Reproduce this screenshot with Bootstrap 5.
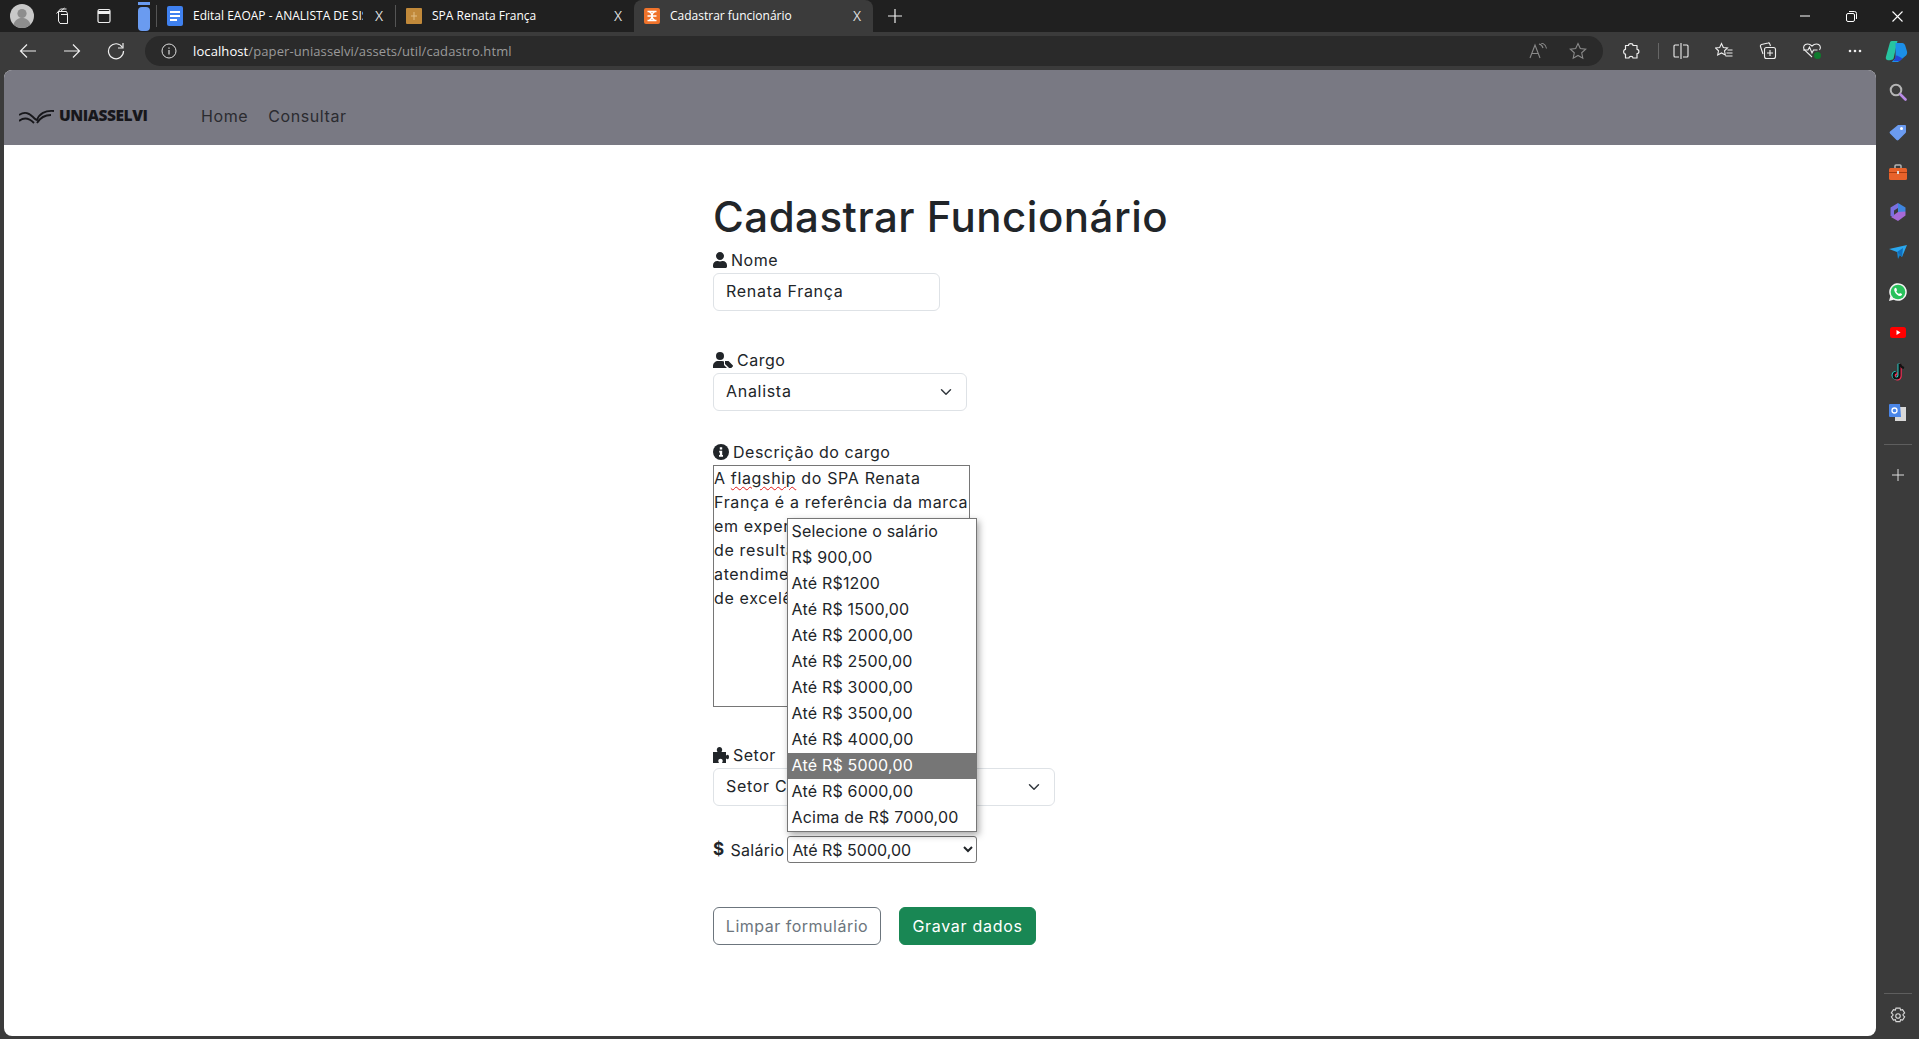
<!DOCTYPE html>
<html lang="pt-BR">
<head>
<meta charset="utf-8">
<title>Cadastrar funcionário</title>
<link rel="stylesheet" href="https://cdn.jsdelivr.net/npm/bootstrap@5.3.0/dist/css/bootstrap.min.css">
<style>
html,body{height:100%;margin:0;overflow:hidden;background:#3b3b3b}
body{font-family:Inter,"Open Sans",sans-serif;font-size:16px;color:#212529}
.shell{height:1039px;width:1919px}
.tabstrip{height:32px;background:#202020;color:#fff;font:12px/32px "Open Sans",sans-serif}
.chromeicon{flex:none;display:flex;align-items:center;justify-content:center}
.chromeicon svg{display:block}
.tabitem{height:32px;width:238px;flex:none;padding:0 10px 0 10px;gap:10px}
.tabitem.activetab{background:#3b3b3b;border-radius:8px 8px 0 0;width:239px}
.tablabel{flex:1;overflow:hidden;white-space:nowrap}
.tabclose{font-size:14px;line-height:1;color:#ddd;flex:none;width:12px;text-align:center}
.tabdiv{width:1px;height:22px;background:#555;flex:none}
.pillslot{width:12px;margin-left:11px;margin-right:6px}
.toolbar{height:38px;background:#3b3b3b;color:#ddd}
.addressbar{width:1458px;height:30px;margin-left:9px;background:#2a2a2a;border-radius:15px;font:13px/30px "Open Sans",sans-serif;color:#9a9a9a;letter-spacing:.1px}
.urlhost{color:#fff}
.mainrow{height:969px}
.pagepane{width:1872px;margin-left:4px;height:966px;background:#fff;border-radius:8px;overflow:hidden}
.sidepane{width:43px;background:#3b3b3b}
.sideslot{height:40px}
.sidesep{width:28px;height:1px;background:#5e5e5e}
.topnav{height:75px;background:#797983;padding:17px 0 0 15px}
.brandmark{width:182px;color:#17171b;font:800 15.5px/1 "Open Sans",sans-serif;letter-spacing:-.45px;gap:5px}
.navtext{color:#2b2b30;font-size:16px;letter-spacing:.6px;text-decoration:none}
.formcol{width:454px;margin:0 auto;position:relative;padding-top:48px}
.formcol h1{font-size:42px;line-height:48px;font-weight:500;margin:0 0 7px;letter-spacing:.5px;color:#212529;white-space:nowrap}
.fieldlabel{display:flex;align-items:center;height:24px;margin-bottom:1px;gap:4px;letter-spacing:.5px}
.softfield{height:38px;border:1px solid #dee2e6;border-radius:6px;font-size:16px;padding:5px 12px 7px;letter-spacing:.7px;color:#212529}
.w-nome{width:227px}.w-cargo{width:254px}.w-setor{width:342px}
.gap-a{margin-bottom:37px}.gap-b{margin-bottom:29px}
.descbox{width:257px;height:242px;border:1px solid #767676;overflow:hidden;white-space:nowrap;line-height:24px;padding:0;margin-bottom:36px;letter-spacing:.65px}
.spellmark{text-decoration:underline wavy #e01b1b 1px;text-underline-offset:2px}
.salaryrow{height:27px;margin:30px 0 44px;gap:3px;letter-spacing:.3px}
.dollarsign{font-weight:700;font-size:17px;line-height:1;margin-right:2px}
.nativepick{width:190px;height:27px;border:1px solid #767676;border-radius:3px;background:#fff;font:16px Inter,sans-serif;color:#212529;letter-spacing:0}
.popuplist{position:absolute;left:74px;top:373px;width:190px;height:314px;background:#fff;border:1px solid #767676;box-shadow:2px 3px 7px rgba(0,0,0,.35);padding:0;z-index:5;margin:0;list-style:none}
.popuplist li{height:26px;line-height:25px;padding-left:3.500px;letter-spacing:.2px;white-space:nowrap}
.popuplist li.picked{background:#767676;color:#fff}
.formbtn{height:38px;font-size:16px;padding:0;white-space:nowrap;display:inline-flex;align-items:center;justify-content:center}
.clearbtn{width:168px;margin-right:18px;letter-spacing:.5px}
.savebtn{width:137px;letter-spacing:.7px}
.winctrls{margin-right:-1px}
</style>
</head>
<body>
<div class="shell d-flex flex-column">
  <div class="tabstrip d-flex align-items-center">
    <div class="chromeicon" style="width:44px"><svg width="24" height="24" viewBox="0 0 24 24"><circle cx="12" cy="12" r="12" fill="#c9c9c9"/><circle cx="12" cy="9.500" r="4.600" fill="#8d8d8d"/><path d="M3.500 20.500c1.500-5 5-6.500 8.500-6.500s7 1.500 8.500 6.500c-2 2.200-5 3.500-8.500 3.500s-6.500-1.300-8.500-3.500z" fill="#8d8d8d"/></svg></div>
    <div class="chromeicon" style="width:37px"><svg width="18" height="18" viewBox="0 0 18 18" fill="none" stroke="#eee"><path d="M4.500 4.500h8l1 2.500v9.500h-7.500l-1.500-2.500z"/><path d="M2.500 6.500l4-4.500h6M6.500 4.500l4-3.500"/><path d="M7 7.500h6.500"/></svg></div>
    <div class="chromeicon" style="width:46px"><svg width="16" height="16" viewBox="0 0 16 16" fill="none" stroke="#eee" stroke-width="1.200"><rect x="2" y="1.500" width="12" height="13" rx="1.500"/><path d="M2 4.500h12" stroke-width="3"/></svg></div>
    <div class="chromeicon pillslot"><svg width="12" height="29" viewBox="0 0 12 29"><rect x="0" width="12" height="3" fill="#6a9bf0"/><rect x="0" y="5" width="12" height="24" rx="4" fill="#6a9bf0"/></svg></div>
    <div class="tabdiv"></div>
    <div class="tabitem d-flex align-items-center">
      <svg class="flex-none" width="16" height="20" viewBox="0 0 16 20"><rect width="16" height="20" rx="2" fill="#3f81f0"/><path d="M3 5h10v2H3zM3 9h10v2H3zM3 13h7v2H3z" fill="#fff"/></svg>
      <span class="tablabel">Edital EAOAP - ANALISTA DE SIST</span><span class="tabclose">X</span>
    </div>
    <div class="tabdiv"></div>
    <div class="tabitem d-flex align-items-center">
      <svg width="16" height="16" viewBox="0 0 16 16"><rect width="16" height="16" rx="1" fill="#c1893a"/><path d="M8 4v8M5 8h6" stroke="#e2bd82"/></svg>
      <span class="tablabel">SPA Renata França</span><span class="tabclose">X</span>
    </div>
    <div class="tabitem activetab d-flex align-items-center">
      <svg width="16" height="16" viewBox="0 0 16 16"><rect width="16" height="16" rx="2" fill="#f0732b"/><path d="M3.500 3.500h9M3.500 12.500h9M5 3.500c4 2 4 7 0 9M11 3.500c-4 2-4 7 0 9M3.500 8h9" stroke="#fff" stroke-width="1.300" fill="none"/></svg>
      <span class="tablabel">Cadastrar funcionário</span><span class="tabclose">X</span>
    </div>
    <div class="chromeicon" style="width:44px"><svg width="16" height="16" viewBox="0 0 16 16" stroke="#eee" stroke-width="1.200"><path d="M8 1v14M1 8h14"/></svg></div>
    <div class="d-flex ms-auto winctrls">
      <div class="chromeicon" style="width:46px"><svg width="10" height="10" viewBox="0 0 10 10" stroke="#fff"><path d="M0 5h10"/></svg></div>
      <div class="chromeicon" style="width:46px"><svg width="11" height="11" viewBox="0 0 11 11" fill="none" stroke="#fff"><rect x=".5" y="2.500" width="8" height="8" rx="1.500"/><path d="M3 .5h5.500a2 2 0 0 1 2 2V8"/></svg></div>
      <div class="chromeicon" style="width:46px"><svg width="11" height="11" viewBox="0 0 11 11" stroke="#fff" stroke-width="1.100"><path d="M.5.5l10 10M10.500.5l-10 10"/></svg></div>
    </div>
  </div>

  <div class="toolbar d-flex align-items-center">
    <div class="chromeicon ms-2" style="width:40px"><svg width="18" height="18" viewBox="0 0 18 18" fill="none" stroke="#eee" stroke-width="1.200"><path d="M17 9H1.500M8 2.500L1.500 9 8 15.500"/></svg></div>
    <div class="chromeicon" style="width:48px"><svg width="18" height="18" viewBox="0 0 18 18" fill="none" stroke="#eee" stroke-width="1.200"><path d="M1 9h15.500M10 2.500L16.500 9 10 15.500"/></svg></div>
    <div class="chromeicon" style="width:40px"><svg width="18" height="18" viewBox="0 0 18 18" fill="none" stroke="#eee" stroke-width="1.200"><path d="M15.500 5.500A7.500 7.500 0 1 0 16.500 9"/><path d="M16 1v5h-5"/></svg></div>
    <div class="addressbar d-flex align-items-center">
      <svg class="ms-3" width="16" height="16" viewBox="0 0 16 16" fill="none" stroke="#ddd"><circle cx="8" cy="8" r="7"/><path d="M8 7v4.500M8 4.500v1.200" stroke-width="1.200"/></svg>
      <span style="margin-left:16px"><span class="urlhost">localhost</span>/paper-uniasselvi/assets/util/cadastro.html</span>
      <div class="ms-auto d-flex align-items-center">
        <svg width="18" height="16" viewBox="0 0 18 16" fill="none" stroke="#8a8a8a" stroke-width="1.100"><path d="M1 15L6 2l5 13M3 10.500h6"/><path d="M10 1c2 .5 3.500 2 4 4M12 0c3 .5 5 3 5.500 5.500"/></svg>
        <svg style="margin:0 16px 0 22px" width="18" height="18" viewBox="0 0 18 18" fill="none" stroke="#8a8a8a" stroke-width="1.100"><path d="M9 1.500l2.300 5 5.400.6-4 3.700 1.100 5.400L9 13.500l-4.800 2.700 1.100-5.400-4-3.700 5.400-.6z"/></svg>
      </div>
    </div>
    <div class="chromeicon" style="width:55px"><svg width="18" height="18" viewBox="0 0 18 18" fill="none" stroke="#eee" stroke-width="1.200"><path d="M6.500 3.500C6.500 1 11 1 11 3.500H15v3.800c2.500 0 2.500 4.400 0 4.400V16h-4c0-2.200-4-2.200-4 0H3.500v-3.800C1 12.200 1 7.300 3.500 7.300V3.500z" stroke-linejoin="round"/></svg></div>
    <div class="tabdiv" style="height:16px;background:#666"></div>
    <div class="chromeicon" style="width:43px"><svg width="16" height="16" viewBox="0 0 16 16" fill="none" stroke="#eee" stroke-width="1.100"><path d="M6 2H2a1 1 0 0 0-1 1v10a1 1 0 0 0 1 1h4M10 2h4a1 1 0 0 1 1 1v10a1 1 0 0 1-1 1h-4M8 0v16"/></svg></div>
    <div class="chromeicon" style="width:43px"><svg width="18" height="18" viewBox="0 0 18 18" fill="none" stroke="#eee" stroke-width="1.100"><path d="M6.500 1.500l1.800 4 4.200.5-3 2.800.8 4.200-3.800-2.100-3.800 2.100.8-4.200-3-2.800 4.200-.5zM12.500 8h5M11.500 11h6M10.500 14h7"/></svg></div>
    <div class="chromeicon" style="width:45px"><svg width="18" height="18" viewBox="0 0 18 18" fill="none" stroke="#eee" stroke-width="1.100"><path d="M4 12L1.500 4.500a1.500 1.500 0 0 1 1-2L9 1a1.500 1.500 0 0 1 1.800 1l.7 2"/><rect x="5.500" y="5.500" width="11" height="11" rx="2"/><path d="M11 8v6M8 11h6"/></svg></div>
    <div class="chromeicon" style="width:43px"><svg width="20" height="18" viewBox="0 0 20 18" fill="none" stroke="#eee" stroke-width="1.100"><path d="M10 15L2.500 8C.5 5.500 2 2 5.500 2 7.500 2 9 3 10 4c1-1 2.500-2 4.500-2C18 2 19.500 5.500 17.500 8"/><path d="M1 8h5l1.500-3 2.500 6 1.500-3h4"/><circle cx="15.500" cy="13.500" r="3.500" fill="#0f7b2e" stroke="none"/></svg></div>
    <div class="chromeicon" style="width:44px"><svg width="14" height="4" viewBox="0 0 14 4" fill="#eee"><circle cx="2" cy="2" r="1.300"/><circle cx="7" cy="2" r="1.300"/><circle cx="12" cy="2" r="1.300"/></svg></div>
    <div class="chromeicon" style="width:39px"><svg width="25" height="23" viewBox="0 0 24 24"><path d="M7 1h6L9 19c-.3 1.500-3 2-4 2H3c-2 0-2.500-2-2-3.500L5 3c.3-1 1-2 2-2z" fill="#27c4a0"/><path d="M11 3h7c1.500 0 2.500 1 3 2.500L23 12c.5 2-.5 4-2 5l-5 4c-1 1-2 2-4 2H7l4-4z" fill="#1c8fe8"/><path d="M9 22h5c1 0 3-1 4-3l-6-3z" fill="#2346d6"/></svg></div>
  </div>

  <div class="mainrow d-flex">
    <main class="pagepane">
      <nav class="navbar topnav d-flex align-items-center flex-nowrap justify-content-start">
        <div class="brandmark d-flex align-items-center">
          <svg width="35" height="15" viewBox="0 0 35 15" fill="none" stroke="#17171b" stroke-width="1.800"><path d="M0 6c6-4 10-2 14 2 2 2 3 3 4 3 2-6 8-10 17-9"/><path d="M0 12c5-4 10-3 15 2M18 14c3-5 8-8 14-8"/></svg>
          <span>UNIASSELVI</span>
        </div>
        <a class="navtext" href="#">Home</a>
        <a class="navtext" style="margin-left:20px" href="#">Consultar</a>
      </nav>
      <form class="formcol" onsubmit="return false">
        <h1>Cadastrar Funcionário</h1>
        <label class="fieldlabel"><svg width="14" height="16" viewBox="0 0 448 512" fill="#212529"><path d="M224 256c70.700 0 128-57.300 128-128S294.700 0 224 0 96 57.300 96 128s57.300 128 128 128zm89.600 32h-16.700c-22.200 10.200-46.900 16-72.900 16s-50.600-5.800-72.900-16h-16.700C60.200 288 0 348.200 0 422.400V464c0 26.500 21.500 48 48 48h352c26.500 0 48-21.500 48-48v-41.600c0-74.200-60.200-134.400-134.400-134.400z"/></svg>Nome</label>
        <input class="form-control softfield w-nome gap-a" value="Renata França">
        <label class="fieldlabel"><svg width="20" height="16" viewBox="0 0 20 16" fill="#212529"><circle cx="7" cy="4" r="4"/><path d="M0 16v-2c0-3 2.500-5 5-5h4c1 0 1.500.2 2 .5V13l3 3z"/><path d="M12 9h3.500l4.200 4.200a1 1 0 0 1 0 1.400l-1.800 1.800a1 1 0 0 1-1.400 0L12 12z"/></svg>Cargo</label>
        <select class="form-select softfield w-cargo gap-b"><option>Analista</option></select>
        <label class="fieldlabel"><svg width="16" height="16" viewBox="0 0 16 16"><circle cx="8" cy="8" r="8" fill="#212529"/><path d="M6.800 3.200h2.400v2.200H6.800zM6.200 6.800h3v4.200h.8v1.800H6v-1.800h.9V8.600h-.7z" fill="#fff"/></svg>Descrição do cargo</label>
        <div class="descbox">A <span class="spellmark">flagship</span> do SPA Renata<br>França é a referência da marca<br>em experiências e na entrega<br>de resultados, com<br>atendimento personalizado e<br>de excelência.</div>
        <label class="fieldlabel"><svg width="16" height="16" viewBox="0 0 16 16" fill="#212529"><path d="M0 5h4.500C4 4 3.800 3.500 3.800 2.800 3.800 1.200 5 0 6.500 0s2.700 1.200 2.700 2.800c0 .7-.2 1.200-.7 2.200H13v3.500c1-.5 1.500-.7 1.800-.7C15.500 7.800 16 8.800 16 10s-.5 2.200-1.200 2.200c-.3 0-.8-.2-1.800-.7V16H9c.5-1 .7-1.500.7-2.200 0-1.200-1-2-2.200-2s-2.200.8-2.200 2c0 .7.200 1.200.7 2.200H0z"/></svg>Setor</label>
        <select class="form-select softfield w-setor"><option>Setor Comercial</option></select>
        <div class="salaryrow d-flex align-items-center">
          <label class="d-flex align-items-center gap-1"><span class="dollarsign">$</span>Salário</label>
          <select class="nativepick"><option>Até R$ 5000,00</option></select>
        </div>
        <div>
          <button type="reset" class="btn btn-outline-secondary formbtn clearbtn">Limpar formulário</button><button type="submit" class="btn btn-success formbtn savebtn">Gravar dados</button>
        </div>
        <ul class="popuplist">
          <li>Selecione o salário</li>
          <li>R$ 900,00</li>
          <li>Até R$1200</li>
          <li>Até R$ 1500,00</li>
          <li>Até R$ 2000,00</li>
          <li>Até R$ 2500,00</li>
          <li>Até R$ 3000,00</li>
          <li>Até R$ 3500,00</li>
          <li>Até R$ 4000,00</li>
          <li class="picked">Até R$ 5000,00</li>
          <li>Até R$ 6000,00</li>
          <li>Acima de R$ 7000,00</li>
        </ul>
      </form>
    </main>
    <aside class="sidepane d-flex flex-column align-items-center pt-0">
      <div class="chromeicon sideslot" style="margin-top:2px"><svg width="18" height="18" viewBox="0 0 18 18" fill="none"><circle cx="7" cy="7" r="5.300" stroke="#b5b5b5" stroke-width="2"/><path d="M11.500 11.500l5 5" stroke="#b98ae6" stroke-width="2.600" stroke-linecap="round"/></svg></div>
      <div class="chromeicon sideslot"><svg width="17" height="17" viewBox="0 0 17 17"><path d="M9 1h7a1 1 0 0 1 1 1v6a1.500 1.500 0 0 1-.5 1L9.500 16a1.500 1.500 0 0 1-2 0L1 9.500a1.500 1.500 0 0 1 0-2z" fill="#6b9bf0"/><circle cx="12.500" cy="4.500" r="1.500" fill="#fff"/></svg></div>
      <div class="chromeicon sideslot"><svg width="18" height="16" viewBox="0 0 18 16"><path d="M6 4V2a1 1 0 0 1 1-1h4a1 1 0 0 1 1 1v2" fill="none" stroke="#b5b5b5" stroke-width="1.500"/><rect y="4" width="18" height="12" rx="1.500" fill="#e8622a"/><rect y="8" width="18" height="1" fill="#a83c10"/><rect x="8" y="7" width="2" height="3" fill="#ddd"/></svg></div>
      <div class="chromeicon sideslot"><svg width="18" height="18" viewBox="0 0 18 18"><path d="M9 0l7.500 4.500v4L9 13z" fill="#3f86e0"/><path d="M16.500 8.500v4L9 18l-7-4 7-5z" fill="#a76ad8"/><path d="M1.500 4.500L9 0v5L5 7.500v6L1.500 13z" fill="#7a6fe0"/></svg></div>
      <div class="chromeicon sideslot"><svg width="18" height="14" viewBox="0 0 18 14"><path d="M0 4l18-4-5 12-5-5z" fill="#2aa7ee"/><path d="M8 7l5 5 1-9z" fill="#0f6fbf"/><path d="M8 7l1 7 2-4z" fill="#1786d0"/></svg></div>
      <div class="chromeicon sideslot"><svg width="18" height="18" viewBox="0 0 18 18"><path d="M0 18l1.300-4.700A8.800 8.800 0 1 1 4.700 16.700z" fill="#f4f4f4"/><circle cx="9" cy="9" r="7.300" fill="#29c15b"/><path d="M6.300 4.800c-1.300.6-1.500 2.400-.3 4.400s3 3.600 5 3.800c1.400 0 2.200-1.200 2-2l-2-1-.9 1c-1-.4-2.300-1.600-2.800-2.800l.8-1-.9-2.200z" fill="#fff"/></svg></div>
      <div class="chromeicon sideslot"><svg width="16" height="11" viewBox="0 0 16 11"><rect width="16" height="11" rx="2.500" fill="#f00"/><path d="M6.500 3l4 2.500-4 2.500z" fill="#fff"/></svg></div>
      <div class="chromeicon sideslot"><svg width="16" height="18" viewBox="0 0 16 18" fill="none"><path d="M9.500 1v11.500a3 3 0 1 1-3-3" stroke="#fe2c55" stroke-width="2.400" transform="translate(1 .7)"/><path d="M9.500 1v11.500a3 3 0 1 1-3-3" stroke="#25f4ee" stroke-width="2.400" transform="translate(-.7 -.3)"/><path d="M9.500 1v11.500a3 3 0 1 1-3-3" stroke="#111" stroke-width="2.200"/><path d="M10 1c.5 2 2 3.500 4 4" stroke="#111" stroke-width="2.200"/></svg></div>
      <div class="chromeicon sideslot"><svg width="17" height="17" viewBox="0 0 17 17"><rect x="6" y="3" width="11" height="14" fill="#d8d8d8"/><path d="M1 0h10l1 13H1a1 1 0 0 1-1-1V1a1 1 0 0 1 1-1z" fill="#4a86e8"/><circle cx="5.500" cy="6.500" r="2.500" fill="none" stroke="#fff" stroke-width="1.300"/></svg></div>
      <div class="sidesep" style="margin-top:12px"></div>
      <div class="chromeicon" style="height:60px"><svg width="12" height="12" viewBox="0 0 12 12" stroke="#ddd"><path d="M6 0v12M0 6h12"/></svg></div>
      <div class="sidesep mt-auto"></div>
      <div class="chromeicon" style="height:44px;margin-bottom:1px"><svg width="18" height="18" viewBox="0 0 16 16" fill="none" stroke="#d8d8d8" stroke-width="1"><path d="M6.200 1h3.600l.5 1.800 1.800-.5 1.800 3-1.400 1.300v.8l1.400 1.300-1.800 3-1.800-.5-.5 1.800H6.200l-.5-1.800-1.800.5-1.800-3 1.400-1.300v-.8L2.100 5.300l1.800-3 1.800.5z"/><circle cx="8" cy="8" r="2"/></svg></div>
    </aside>
  </div>
</div>
<script src="https://cdn.jsdelivr.net/npm/bootstrap@5.3.0/dist/js/bootstrap.bundle.min.js"></script>
</body>
</html>
